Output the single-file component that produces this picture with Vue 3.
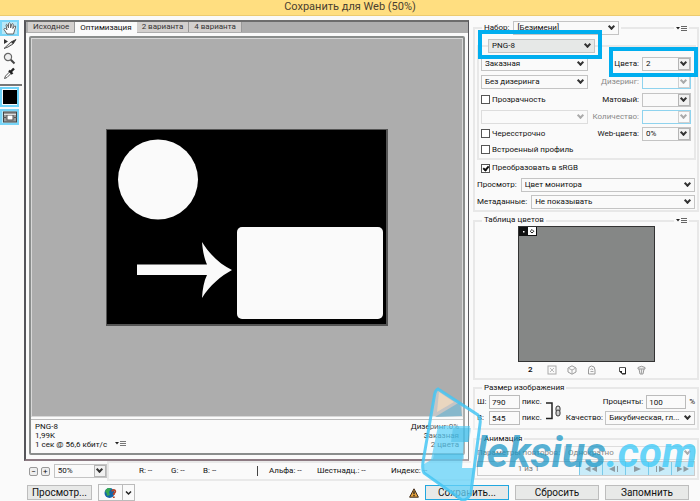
<script setup>
import { ref } from 'vue'

const tabs = ['Исходное', 'Оптимизация', '2 варианта', '4 варианта']
const activeTab = ref('Оптимизация')
const transparency = ref(false)
const interlaced = ref(false)
const embedProfile = ref(false)
const convertSrgb = ref(true)
const width = ref('790')
const height = ref('545')
const percent = ref('100')
</script>

<template>
  <div class="dialog">
    <header class="title">Сохранить для Web (50%)</header>

    <div class="body">
      <nav class="tools" aria-label="Инструменты">
        <button class="tool on" aria-label="Рука">
          <svg width="14" height="13" viewBox="0 0 14 13"><path d="M4 12 L1 7.500 Q1 6 2.500 6.500 L4 8 L3 3 Q3.500 1.500 4.500 3 L5.500 6 L5.500 1.500 Q6.500 0 7.300 1.500 L7.600 6 L8.800 2 Q10 1 10.300 2.500 L9.800 6.500 L11.500 4 Q13 3.500 12.600 5 L10.500 12 Z" fill="#fff" stroke="#666" stroke-width="1" /></svg>
        </button>
        <button class="tool" aria-label="Выделение фрагмента">
          <svg width="14" height="12" viewBox="0 0 14 12"><path d="M1 1 L5 3.500 L1 6 Z" fill="#333" /><path d="M1 10.500 L8 4 L13 1.500 L10 6 L5 9 Z" fill="#ddd" stroke="#555" /><path d="M8 4 L13 1.500 L10 6 Z" fill="#333" /></svg>
        </button>
        <button class="tool" aria-label="Масштаб">
          <svg width="13" height="13" viewBox="0 0 13 13"><circle cx="5" cy="5" r="3.600" fill="#eee" stroke="#666" stroke-width="1.200" /><path d="M7.800 7.800 L11.500 11.500" stroke="#444" stroke-width="2" /></svg>
        </button>
        <button class="tool" aria-label="Пипетка">
          <svg width="13" height="13" viewBox="0 0 13 13"><path d="M1.500 11.500 L2.500 9 L7 4.500 L8.500 6 L4 10.500 Z" fill="#fff" stroke="#555" /><path d="M6 3.500 L9.500 7 M7.500 5 L11 1.500" stroke="#222" stroke-width="2.400" /></svg>
        </button>
        <hr />
        <button class="tool swatch" aria-label="Цвет пипетки"><i></i></button>
        <button class="tool on" aria-label="Видимость фрагментов">
          <svg width="14" height="12" viewBox="0 0 14 12"><rect x=".5" y="1" width="13" height="10" fill="#999" stroke="#444" /><rect x="4" y="4" width="6" height="5" fill="#fff" stroke="#555" /><path d="M1 3.500 H13" stroke="#ddd" /><path d="M0 6.500 H3 M11 6.500 H14" stroke="#555" /></svg>
        </button>
      </nav>

      <main class="left">
        <div class="frame">
          <div class="tabs">
            <button v-for="t in tabs" :key="t" :class="{ active: t === activeTab }" @click="activeTab = t">{{ t }}</button>
          </div>
          <div class="pane">
            <div class="canvas">
              <svg class="art" width="282" height="197" viewBox="0 0 282 197">
                <rect width="282" height="197" fill="#555" />
                <rect x="1" y="1" width="279" height="194" fill="#000" />
                <circle cx="52" cy="50.500" r="40" fill="#fafafa" />
                <path d="M31 135.500 H101 C98 129 96.500 120 96 113 C104 126 115 136 126 141 C115 147 104 156 96 169 C96.500 160 98 152 101 146 H31 Z" fill="#fafafa" />
                <rect x="131" y="98" width="146" height="92" rx="5" fill="#fafafa" />
              </svg>
            </div>
            <div class="info">
              <div>
                <p>PNG-8</p>
                <p>1,99K</p>
                <p>1 сек @ 56,6 кбит/с
                  <svg class="mini" width="11" height="7" viewBox="0 0 11 7"><path d="M0 2 H4 L2 4.500 Z" fill="#222" /><path d="M5 1.500 H11 M5 3.500 H11 M5 5.500 H11" stroke="#777" /></svg>
                </p>
              </div>
              <div class="end">
                <p>Дизеринг:0%</p>
                <p>Заказная</p>
                <p>2 цвета</p>
              </div>
            </div>
          </div>
        </div>

        <div class="status">
          <div class="zoomer">
            <button class="step" aria-label="Уменьшить">−</button>
            <button class="step" aria-label="Увеличить">+</button>
            <span class="combo split zoom"><select aria-label="Масштаб просмотра"><option>50%</option></select></span>
          </div>
          <div class="readout">
            <span class="c1">R: --</span><span class="c1">G: --</span><span class="c2">B: --</span>
            <span class="c3">Альфа: --</span><span class="c4">Шестнадц.: --</span><span>Индекс: --</span>
          </div>
        </div>
      </main>

      <aside class="right">
        <section class="group preset">
          <div class="cap">
            <span class="lab"><label for="preset">Набор:</label>
              <span class="combo presetbox"><select id="preset"><option>[Безимени]</option></select></span></span>
            <button class="menu" aria-label="Меню набора"><svg width="11" height="7" viewBox="0 0 11 7"><path d="M0 2 H4 L2 4.500 Z" fill="#222" /><path d="M5 1.500 H11 M5 3.500 H11 M5 5.500 H11" stroke="#666" /></svg></button>
          </div>
          <div class="group inner">
            <div class="cap">
              <span class="combo format"><select aria-label="Формат"><option>PNG-8</option></select></span>
            </div>
            <div class="opts">
              <span class="combo"><select aria-label="Палитра"><option>Заказная</option></select></span>
              <label for="colors">Цвета:</label>
              <span class="combo split"><select id="colors"><option>2</option></select></span>

              <span class="combo"><select aria-label="Способ дизеринга"><option>Без дизеринга</option></select></span>
              <label for="dither" class="off">Дизеринг:</label>
              <span class="combo split off blue"><select id="dither" disabled><option></option></select></span>

              <label class="check"><input v-model="transparency" type="checkbox" />Прозрачность</label>
              <label for="matte">Матовый:</label>
              <span class="combo split"><select id="matte"><option></option></select></span>

              <span class="combo off"><select aria-label="Дизеринг прозрачности" disabled><option></option></select></span>
              <label for="amount" class="off">Количество:</label>
              <span class="combo split off blue"><select id="amount" disabled><option></option></select></span>

              <label class="check"><input v-model="interlaced" type="checkbox" />Чересстрочно</label>
              <label for="websnap">Web-цвета:</label>
              <span class="combo split"><select id="websnap"><option>0%</option></select></span>

              <label class="check"><input v-model="embedProfile" type="checkbox" />Встроенный профиль</label>
            </div>
          </div>
          <div class="row short"><label class="check"><input v-model="convertSrgb" type="checkbox" />Преобразовать в sRGB</label></div>
          <div class="row"><label for="view">Просмотр:</label><span class="combo grow"><select id="view"><option>Цвет монитора</option></select></span></div>
          <div class="row"><label for="meta">Метаданные:</label><span class="combo grow"><select id="meta"><option>Не показывать</option></select></span></div>
        </section>

        <section class="group table">
          <div class="cap">
            <h2>Таблица цветов</h2>
            <button class="menu" aria-label="Меню таблицы"><svg width="11" height="7" viewBox="0 0 11 7"><path d="M0 2 H4 L2 4.500 Z" fill="#222" /><path d="M5 1.500 H11 M5 3.500 H11 M5 5.500 H11" stroke="#666" /></svg></button>
          </div>
          <div class="palette">
            <svg width="18" height="9" viewBox="0 0 18 9"><rect width="18" height="9" fill="#111" /><rect x="9" y="0" width="8" height="8" fill="#fff" /><rect x="4" y="4" width="1.500" height="1.500" fill="#fff" /><path d="M13 2.500 L14.800 4.300 L13 6 L11.200 4.300 Z" fill="none" stroke="#222" /></svg>
          </div>
          <div class="ptools">
            <b>2</b>
            <button aria-label="Прозрачный цвет"><svg width="10" height="10" viewBox="0 0 10 10"><rect x="1" y="1" width="8" height="8" fill="none" stroke="#aaa" /><path d="M3 3 L7 7 M7 3 L3 7" stroke="#bbb" /></svg></button>
            <button aria-label="Web-цвет"><svg width="10" height="10" viewBox="0 0 10 10"><path d="M5 .8 L9 3 V7 L5 9.200 L1 7 V3 Z" fill="none" stroke="#999" /><path d="M2 3.500 L5 5 L8 3.500 M5 5 V9" fill="none" stroke="#aaa" /></svg></button>
            <button aria-label="Закрепить цвет"><svg width="10" height="10" viewBox="0 0 10 10"><path d="M1.500 9 V5 Q1.500 1 4.500 1 Q8 1 8 5 V9 Z" fill="none" stroke="#999" /><path d="M3.500 5 Q4.700 2 6 5 M3.500 6.500 H6.500" fill="none" stroke="#aaa" /></svg></button>
            <button class="gap" aria-label="Новый цвет"><svg width="9" height="9" viewBox="0 0 9 9"><path d="M1.500 1.500 H7.500 V7.500 H4 L1.500 5 Z" fill="#fff" stroke="#555" /><path d="M1 5 H4 V8 Z" fill="#222" /><path d="M7.500 2 V8 H4" fill="none" stroke="#222" /></svg></button>
            <button aria-label="Удалить цвет"><svg width="9" height="10" viewBox="0 0 9 10"><path d="M1 2.500 Q4.500 0 8 2.500 V4 H1 Z M2 4 L3 9 H6 L7 4" fill="#eee" stroke="#999" /><path d="M4.500 4 V9" stroke="#aaa" /></svg></button>
          </div>
        </section>

        <section class="group size">
          <div class="cap"><h2>Размер изображения</h2></div>
          <div class="dims">
            <div class="col">
              <div class="row16"><label for="w">Ш:</label><input id="w" v-model="width" type="text" /><span>пикс.</span></div>
              <div class="row16"><label for="h">В:</label><input id="h" v-model="height" type="text" /><span>пикс.</span></div>
            </div>
            <svg class="link" width="16" height="20" viewBox="0 0 16 20"><path d="M0 2 H6 V17.500 H0" fill="none" stroke="#222" stroke-width="1.500" /><rect x="10" y="5" width="4" height="6" rx="2" fill="#ddd" stroke="#333" /><rect x="10" y="9" width="4" height="6" rx="2" fill="#ccc" stroke="#333" /></svg>
            <div class="col wide">
              <div class="row16 end"><label for="pc">Проценты:</label><input id="pc" v-model="percent" type="text" /><span>%</span></div>
              <div class="row16 end"><label for="quality">Качество:</label><span class="combo quality"><select id="quality"><option>Бикубическая, гл...</option></select></span></div>
            </div>
          </div>
        </section>

        <section class="group anim">
          <div class="cap"><h2>Анимация</h2></div>
          <div class="row loop off"><label for="loop">Параметры повторов:</label><span class="combo off grow"><select id="loop" disabled><option>Однократно</option></select></span></div>
          <div class="player">
            <span>1 из 1</span>
            <button disabled aria-label="Первый кадр"><svg width="14" height="8" viewBox="0 0 14 8"><path d="M6.500 1 V7 L1 4 Z M13 1 V7 L7.500 4 Z" /></svg></button>
            <button disabled aria-label="Предыдущий кадр"><svg width="14" height="8" viewBox="0 0 14 8"><path d="M8 1 V7 L2 4 Z M10 1 H11 V7 H10 Z" /></svg></button>
            <button disabled aria-label="Воспроизвести"><svg width="14" height="8" viewBox="0 0 14 8"><path d="M4 1 L11 4 L4 7 Z" /></svg></button>
            <button disabled aria-label="Следующий кадр"><svg width="14" height="8" viewBox="0 0 14 8"><path d="M6 1 L12 4 L6 7 Z M3 1 H4 V7 H3 Z" /></svg></button>
            <button disabled aria-label="Последний кадр"><svg width="14" height="8" viewBox="0 0 14 8"><path d="M1 1 L6.500 4 L1 7 Z M7.500 1 L13 4 L7.500 7 Z" /></svg></button>
          </div>
        </section>
      </aside>
    </div>

    <footer class="foot">
      <button class="btn view">Просмотр...</button>
      <button class="browser" aria-label="Выбрать браузер">
        <span><svg width="13" height="12" viewBox="0 0 13 12"><circle cx="5.500" cy="6" r="5" fill="#1565a8" /><path d="M2 2.500 Q5 0 7 2 L5 5 L6 8 L3 9 Q3 5 1 5 Z" fill="#35a852" /><path d="M8 4.500 Q8.500 2.500 10.500 3 Q12.500 4.500 9.800 6.500 V8 M9.800 9.500 V11" fill="none" stroke="#b4452c" stroke-width="1.800" /></svg></span>
        <span class="arrow"><svg width="7" height="6" viewBox="0 0 7 6"><path d="M1 1.500 L3.500 4 L6 1.500" fill="none" stroke="#222" stroke-width="1.500" /></svg></span>
      </button>
      <svg class="warn" width="10" height="10" viewBox="0 0 10 10"><path d="M5 .8 L9.400 9.200 H.6 Z" fill="#e8a33a" stroke="#3d2a1a" /><path d="M5 3.200 V6.200 M5 7 V8.300" stroke="#222" stroke-width="1.300" /></svg>
      <button class="btn main">Сохранить...</button>
      <button class="btn">Сбросить</button>
      <button class="btn">Запомнить</button>
    </footer>

    <i class="mark mark-format"></i>
    <i class="mark mark-colors"></i>

    <div class="brand">
      <svg width="66" height="120" viewBox="0 0 66 120">
        <path d="M20 7 L60 33 Q63 36 62 42 L53 110 Q51 118 44 118 L6 91 Q4 88 5 80 L16 16 Q17 8 20 7 Z" fill="#fff" opacity=".3" />
        <path d="M21 10 L36 20 L19 30 Z" fill="#f3d9bd" opacity=".8" />
        <path d="M17 35 L42 20 L44 34 Z" fill="#7fb6cc" opacity=".9" />
        <path d="M20 44 H52 L50 60 H46 L44 86 L56 86 L52 110 Q51 118 44 118 L6 91 V82 L13 78 Z" fill="#4ccbf8" opacity=".65" />
        <path d="M35 46 H53 L51 60 H33 Z M16 72 H46 V77 H15 Z" fill="#38b2df" opacity=".4" />
        <path d="M20 7 L60 33 Q63 36 62 42 L53 110 Q51 118 44 118 L6 91 Q4 88 5 80 L16 16 Q17 8 20 7 Z" fill="none" stroke="#45c6f3" stroke-width="3" opacity=".85" />
      </svg>
      <span class="word">leksius<em>.com</em></span>
    </div>
  </div>
</template>

<style>
body { background: #fafafa; }
</style>

<style scoped>
*, *::before, *::after { box-sizing: border-box; }
.dialog {
  position: relative;
  overflow: hidden;
  font: 8px/10px Roboto, "Noto Sans", sans-serif;
  color: #111;
}
button, input, select { font: inherit; color: inherit; margin: 0; }
button { padding: 0; border: 0; background: none; }
svg { display: block; flex: none; }
p, h2 { margin: 0; font: inherit; }
.title {
  height: 16px;
  background: #ffde80;
  border-bottom: 1px solid #eccb70;
  font-size: 11px;
  line-height: 13px;
  text-align: center;
  color: #4a4030;
}
.body { display: grid; grid-template-columns: 22px minmax(0, 1fr) 227px; column-gap: 2px; }

.tools { display: flex; flex-direction: column; padding-top: 4px; }
.tool { display: flex; align-items: center; justify-content: center; width: 19px; height: 15px; }
.tool.on { background: #b9e8f7; border: 2px solid #78d5f8; height: 16px; }
.tools hr { width: 22px; height: 2px; margin: 3px 0 1px; border: 0; background: #777; }
.tool.swatch { height: 20px; border: 2px solid #6fd3f9; margin-bottom: 2px; }
.tool.swatch i { width: 14px; height: 14px; background: #000; }

.left { display: flex; flex-direction: column; padding-top: 4px; min-width: 0; }
.frame {
  flex: 1;
  display: flex;
  flex-direction: column;
  margin-right: 2px;
  border: solid #55555a;
  border-width: 2px 1px 2px 2px;
  border-top-color: #6c6c6c;
  border-bottom-color: #8c7a82;
}
.tabs { display: flex; height: 11px; background: #adadad; padding-left: 2px; }
.tabs button { height: 10px; padding: 0 5px; line-height: 10px; background: #d3d0ce; border-right: 1px solid #999; color: #333; }
.tabs button.active { height: 11px; background: #fafafa; border-right: 0; color: #111; }
.pane {
  flex: 1;
  display: flex;
  flex-direction: column;
  margin: 3px 3px 4px;
  border: 2px solid #8a8d8c;
  border-radius: 2px;
}
.canvas {
  flex: 1;
  display: flex;
  align-items: center;
  justify-content: center;
  background: #adadad;
  border: 1px solid #d8d8d8;
}
.info { display: flex; justify-content: space-between; margin-top: 2px; padding: 2px 4px 4px; border-top: 1px solid #bbb; }
.info p { line-height: 9px; height: 9px; }
.info .end { text-align: right; }
.mini { display: inline-block; margin-left: 6px; }

.status { display: flex; height: 20px; }
.zoomer { display: flex; align-items: center; gap: 3px; padding-left: 5px; width: 83px; }
.step { width: 9px; height: 9px; border: 1px solid #999; border-radius: 2px; line-height: 7px; background: #eee; }
.zoom { width: 54px; margin-left: 1px; }
.zoom select { padding-left: 12px; }
.readout { flex: 1; display: flex; align-items: center; border: 2px solid #e9e9e9; border-right: 0; padding-left: 30px; white-space: nowrap; }
.c1 { width: 32px; }
.c2 { width: 54px; }
.c3 { width: 60px; border-left: 1px solid #444; padding-left: 11px; }
.c4 { width: 74px; }

.right { padding: 11px 1px 1px 0; }
.group { border: 2px solid #e8e8e8; }
.cap { display: flex; justify-content: space-between; align-items: center; height: 14px; margin-top: -8px; padding: 0 8px 0 7px; }
.cap h2, .lab, .menu { background: #fafafa; padding: 0 2px; }
.menu { height: 8px; }
.lab { display: flex; align-items: center; gap: 4px; }
.presetbox { width: 106px; }
.inner { margin: 10px 1px 0 2px; }
.inner .cap { padding: 0 0 0 9px; }
.format { width: 107px; background: #e6e8e7; }
.opts {
  display: grid;
  grid-template-columns: 107px 1fr 49px;
  grid-template-rows: 18px 18px 17px 17px 17px 15px;
  align-items: center;
  column-gap: 3px;
  padding: 2px 3px 1px 2px;
}
.opts > label:not(.check) { text-align: right; }
.off { color: #888; }
.combo { position: relative; display: block; height: 14px; border: 1px solid #c4c4c4; }
.combo select {
  display: block;
  width: 100%;
  height: 12px;
  padding: 0 14px 0 3px;
  border: 0;
  background: none;
  appearance: none;
  line-height: 12px;
  opacity: 1;
}
.combo::after {
  content: "";
  position: absolute;
  right: 4px;
  top: 2px;
  width: 5px;
  height: 5px;
  border: solid #333;
  border-width: 0 2px 2px 0;
  transform: rotate(45deg);
  pointer-events: none;
}
.combo.split::before {
  content: "";
  position: absolute;
  right: 0;
  top: 0;
  width: 12px;
  height: 12px;
  border: 1px solid #b5b5b5;
  background: #f1f1f1;
  pointer-events: none;
}
.combo.off { border-color: #ddd; }
.combo.off::after { border-color: #aaa; }
.combo.blue { border-color: #8fd3ee; }
.combo.blue::before { border-color: #d0d0d0; background: #fafafa; }
.grow { flex: 1; }
.check { display: flex; align-items: center; gap: 2px; white-space: nowrap; }
.check input { appearance: none; width: 9px; height: 9px; border: 1px solid #555; background: #fff; position: relative; }
.check input:checked::after {
  content: "";
  position: absolute;
  left: 2px;
  top: 0;
  width: 4px;
  height: 6px;
  border: solid #111;
  border-width: 0 2px 2px 0;
  transform: rotate(40deg);
}
.row { display: flex; align-items: center; gap: 4px; height: 17px; padding: 0 2px; white-space: nowrap; }
.row.short { height: 16px; padding-left: 6px; }
.row.loop { height: 15px; }

.table { margin-top: 8px; }
.table .cap { height: 12px; }
.palette { width: 137px; height: 136px; margin-left: 43px; border: 1px solid #333; background: #858786; }
.ptools { display: flex; align-items: center; gap: 10px; height: 16px; padding-left: 53px; }
.ptools b { width: 9px; font-weight: 600; }
.ptools .gap { margin-left: 11px; }

.size { margin-top: 7px; }
.size .cap, .anim .cap { height: 12px; margin-top: -7px; }
.dims { display: flex; gap: 4px; padding: 0 2px 2px; }
.row16 { display: flex; align-items: center; gap: 2px; height: 16px; }
.row16 > label { white-space: nowrap; min-width: 10px; }
.row16 input { width: 31px; height: 14px; border: 1px solid #bbb; background: #fafafa; padding: 0 2px; }
.row16.end { justify-content: flex-end; gap: 3px; }
.row16.end input { width: 40px; }
.wide { flex: 1; min-width: 0; }
.quality { width: 92px; }
.link { margin-top: 7px; }

.anim { margin-top: 8px; }
.player { display: flex; height: 15px; margin: 1px 2px 2px; border: 1px solid #ccc; color: #777; }
.player span { flex: 1; text-align: center; line-height: 14px; }
.player button { display: flex; align-items: center; justify-content: center; width: 23px; background: #c9ecf9; border-left: 1px solid #7acbea; }
.player path { fill: #8d9ba2; }

.foot { display: flex; align-items: center; gap: 6px; padding: 3px 11px 0 27px; }
.btn { width: 84px; height: 15px; border: 1px solid #bdbdbd; background: #e8e9e8; font-size: 10px; line-height: 13px; }
.btn.view { width: 65px; }
.btn.main { border: 1px solid #22a7df; }
.browser { display: flex; width: 37px; height: 17px; border: 1px solid #bbb; }
.browser span { flex: 1; display: flex; align-items: center; justify-content: center; height: 15px; }
.browser .arrow { flex: none; width: 12px; border-left: 1px solid #bbb; }
.warn { margin-left: auto; }

.mark { position: absolute; border: 4px solid #00aeef; pointer-events: none; }
.mark-format { right: 98px; top: 30px; width: 124px; height: 29px; }
.mark-colors { right: 2px; top: 47px; width: 89px; height: 30px; }
.brand { position: absolute; right: 0; bottom: 0; width: 282px; height: 119px; pointer-events: none; }
.word {
  position: absolute;
  left: 58px;
  top: 44px;
  font: italic bold 42px/54px Roboto, "Liberation Sans", sans-serif;
  color: rgba(22, 148, 196, .72);
}
.word em { color: rgba(64, 202, 248, .78); }
</style>
